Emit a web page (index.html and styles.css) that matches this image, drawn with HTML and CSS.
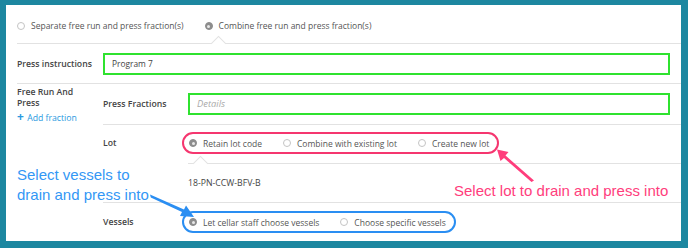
FILE: index.html
```html
<!DOCTYPE html>
<html lang="en">
<head>
  <meta charset="UTF-8">
  <meta name="viewport" content="width=device-width, initial-scale=1.0">
  <title>Drain and press</title>
  <link rel="stylesheet" href="styles.css">
</head>
<body>
  <section class="panel">
    <div class="mode">
      <label class="radio"><span class="dot"></span>Separate free run and press fraction(s)</label>
      <label class="radio"><span class="dot on"></span>Combine free run and press fraction(s)</label>
    </div>
    <div class="rule notch-mode"></div>

    <div class="row">
      <div class="label">Press instructions</div>
      <div class="field green">Program 7</div>
    </div>

    <div class="group">
      <div class="group-label">
        <div class="label">Free Run And<br>Press</div>
        <a class="add" href="#"><b>+</b> Add fraction</a>
      </div>
      <div class="sub">
        <div class="subrow">
          <div class="sublabel">Press Fractions</div>
          <div class="field green placeholder">Details</div>
        </div>
        <div class="subrow lot">
          <div class="sublabel">Lot</div>
          <div class="content">
            <div class="pill pink">
              <label class="radio"><span class="dot on"></span>Retain lot code</label>
              <label class="radio"><span class="dot"></span>Combine with existing lot</label>
              <label class="radio"><span class="dot"></span>Create new lot</label>
            </div>
            <div class="rule notch-lot"></div>
            <div class="code">18-PN-CCW-BFV-B</div>
          </div>
        </div>
        <div class="subrow last">
          <div class="sublabel">Vessels</div>
          <div class="pill blue">
            <label class="radio"><span class="dot on"></span>Let cellar staff choose vessels</label>
            <label class="radio"><span class="dot"></span>Choose specific vessels</label>
          </div>
        </div>
      </div>
    </div>

    <!-- screenshot callouts -->
    <div class="note note-blue">Select vessels to<br>drain and press into</div>
    <div class="note note-pink">Select lot to drain and press into</div>
    <svg class="arrows" width="675" height="236" viewBox="0 0 675 236">
      <polygon fill="#2a8ef2" points="144,189.5 144.8,192.5 176,207 174,211 188,212 180,200.5 178,204.5"/>
      <polygon fill="#ff3d7c" points="528,175.5 525.5,177 498,153 494.5,156 491,144.5 502.5,147 499.5,150.5"/>
    </svg>
  </section>
</body>
</html>
```

FILE: styles.css
```css
* {
  margin: 0;
  padding: 0;
  box-sizing: border-box;
}

body {
  background-color: #1d87a0;
  font-family: "Open Sans", sans-serif;
  font-size: 8.7px;
  color: #555;
  padding: 5px 7px 7px 6px;
}

.panel {
  position: relative;
  background: white;
  height: 236px;
  overflow: hidden;
}

.mode {
  display: flex;
  gap: 21px;
  padding: 14px 11px 10px;
  line-height: 14px;
  font-size: 8.5px;
}

.radio {
  display: flex;
  align-items: center;
  gap: 6px;
  white-space: nowrap;
}

.dot {
  width: 8px;
  height: 8px;
  border-radius: 50%;
  border: 1px solid #c4c4c4;
  background: white;
  display: flex;
  align-items: center;
  justify-content: center;
}

.dot.on {
  background: #8d8d8d;
  border-color: #8d8d8d;
}

.dot.on::after {
  content: "";
  width: 3px;
  height: 3px;
  border-radius: 50%;
  background: #e8e8e8;
}

.rule {
  position: relative;
  height: 1px;
  background: #e2e2e2;
}

.notch-mode {
  margin-left: 11px;
}

.rule::after {
  content: "";
  position: absolute;
  top: -5px;
  width: 10px;
  height: 10px;
  background: white;
  border-top: 1px solid #e2e2e2;
  border-left: 1px solid #e2e2e2;
  transform: rotate(45deg);
}

.notch-mode::after {
  left: 196px;
}

.notch-lot::after {
  left: 7px;
}

.row {
  display: flex;
  align-items: center;
  padding: 9px 11px 8px 0;
  margin-left: 11px;
  border-bottom: 1px solid #e2e2e2;
}

.label {
  width: 86px;
  font-weight: 600;
  color: #444;
  line-height: 10.5px;
}

.field {
  flex: 1;
  height: 22px;
  line-height: 18px;
  padding: 0 7px;
  border: 2px solid #2fe22f;
  color: #444;
  font-size: 8.4px;
}

.placeholder {
  font-style: italic;
  color: #aaa;
  font-size: 9.4px;
}

.group {
  display: flex;
  padding-left: 11px;
}

.group-label {
  width: 86px;
  padding-top: 3px;
}

.add {
  display: block;
  margin-top: 2px;
  color: #2a9ae0;
  text-decoration: none;
  line-height: 14px;
}

.add b {
  font-size: 12px;
  margin-right: 1px;
}

.sub {
  flex: 1;
}

.subrow {
  display: flex;
  align-items: center;
  padding: 9px 11px 9px 0;
  border-bottom: 1px solid #e2e2e2;
}

.subrow.lot {
  align-items: flex-start;
  padding: 7px 0 0;
}

.subrow.lot .sublabel {
  line-height: 22px;
}

.subrow.last {
  border-bottom: none;
  padding: 8px 0 7px;
}

.sublabel {
  width: 85px;
  font-weight: 600;
  color: #444;
}

.content {
  flex: 1;
}

.pill {
  display: inline-flex;
  align-items: center;
  gap: 21px;
  height: 22px;
  margin-left: -6px;
  padding: 0 8px 0 5px;
  border: 2px solid;
  border-radius: 11px;
  font-size: 8.5px;
}

.pink {
  border-color: #f5366f;
}

.blue {
  border-color: #2a8ef2;
}

.notch-lot {
  margin-top: 9px;
}

.code {
  height: 38px;
  line-height: 39px;
  color: #444;
}

.note {
  position: absolute;
  font-family: "Liberation Sans", Arial, sans-serif;
  font-size: 15px;
  line-height: 20px;
}

.note-blue {
  left: 11px;
  top: 160px;
  color: #3397f5;
}

.note-pink {
  left: 448px;
  top: 176px;
  color: #ff3d7c;
}

.arrows {
  position: absolute;
  left: 0;
  top: 0;
}
```
